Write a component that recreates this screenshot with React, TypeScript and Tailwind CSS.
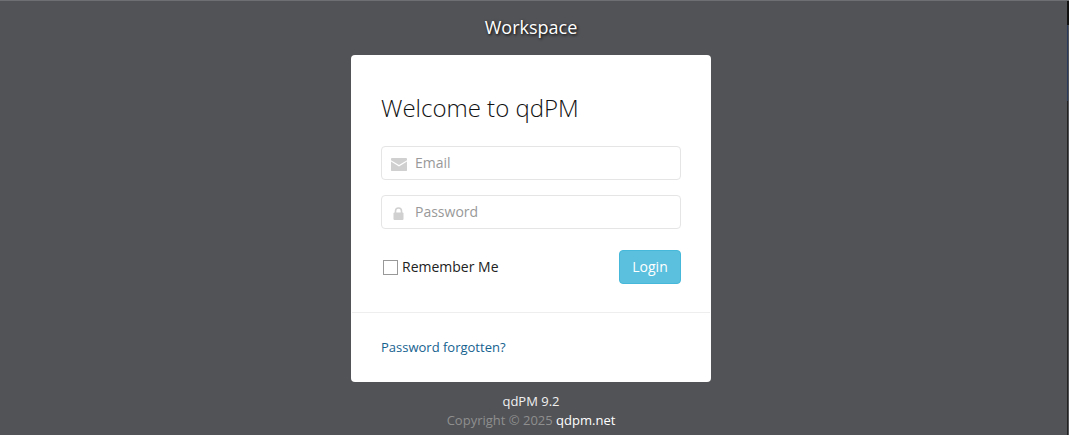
import React from 'react';

const font = "font-['Open_Sans',sans-serif]";

const MailIcon = () => (
  <svg width="16" height="13" viewBox="0 0 16 13" className="shrink-0">
    <path d="M0.500 0h15l.5.500v1.700L8 7 0 2.200V.5z" fill="#d0d0d0" />
    <path d="M0 3.600L8 8.500l8-4.900V12.500l-.5.500H.5L0 12.500z" fill="#d0d0d0" />
  </svg>
);

const LockIcon = () => (
  <svg width="11" height="13" viewBox="0 0 11 13" className="shrink-0">
    <path d="M2.500 6V4a3 3 0 0 1 6 0v2" fill="none" stroke="#d0d0d0" strokeWidth="1.600" />
    <rect x="0.500" y="5.500" width="10" height="7.500" rx="1" fill="#d0d0d0" />
  </svg>
);

const App: React.FC = () => {
  return (
    <div className="flex h-[435px] w-[1069px] overflow-hidden bg-[#525357] border-t border-[#6e6f72]">
      <div className={`${font} w-[1062px] h-full flex flex-col items-center`}>
        <h1 className="mt-[13px] h-[26px] text-[18px] leading-[26px] text-white [text-shadow:1px_1px_3px_rgba(0,0,0,0.95)]">Workspace</h1>
        <div className="mt-[15px] w-[360px] bg-white rounded-[4px]">
          <div className="px-[30px] pt-[36px]">
            <h3 className="text-[24px] leading-[33px] font-light text-[#111]">Welcome to qdPM</h3>
            <div className="mt-[22px] h-[34px] flex items-center border border-[#e5e5e5] rounded-[4px]">
              <span className="w-[33px] pl-[9px] pt-[3px]"><MailIcon /></span>
              <span className="text-[14px] text-[#999] pb-[2px]">Email</span>
            </div>
            <div className="mt-[15px] h-[34px] flex items-center border border-[#e5e5e5] rounded-[4px]">
              <span className="w-[33px] pl-[11px] pt-[2px]"><LockIcon /></span>
              <span className="text-[14px] text-[#999] pb-[2px]">Password</span>
            </div>
            <div className="mt-[21px] flex items-center justify-between">
              <label className="flex items-center pl-[2px] text-[14px] text-[#222]">
                <span className="w-[15px] h-[15px] mr-[4px] border border-[#999] bg-white" />
                <span className="pb-[2px]">Remember Me</span>
              </label>
              <button className="h-[34px] w-[62px] pb-[2px] bg-[#5bc0de] border border-[#46b8da] rounded-[4px] text-[14px] text-white">Login</button>
            </div>
          </div>
          <div className="mt-[28px] mx-[1px] border-t border-[#eeeeee] px-[29px] pt-[25px] pb-[26px]">
            <a className="block text-[13px] leading-[18px] text-[#15628f]">Password forgotten?</a>
          </div>
        </div>
        <div className="mt-[10px] text-[13px] leading-[19px] text-center text-[#f0f0f0]">
          <div>qdPM 9.2</div>
          <div className="text-[#8f8f8f]">Copyright © 2025 <a className="text-white">qdpm.net</a></div>
        </div>
      </div>
      <div className="flex-1 flex justify-end">
        <div className="w-[2px] h-full flex flex-col">
          <div className="h-[24px] bg-[#111]" />
          <div className="h-[76px] border-l border-[#2a3a5a]" />
          <div className="flex-1 border-l border-[#222]" />
        </div>
      </div>
    </div>
  );
};

export default App;
